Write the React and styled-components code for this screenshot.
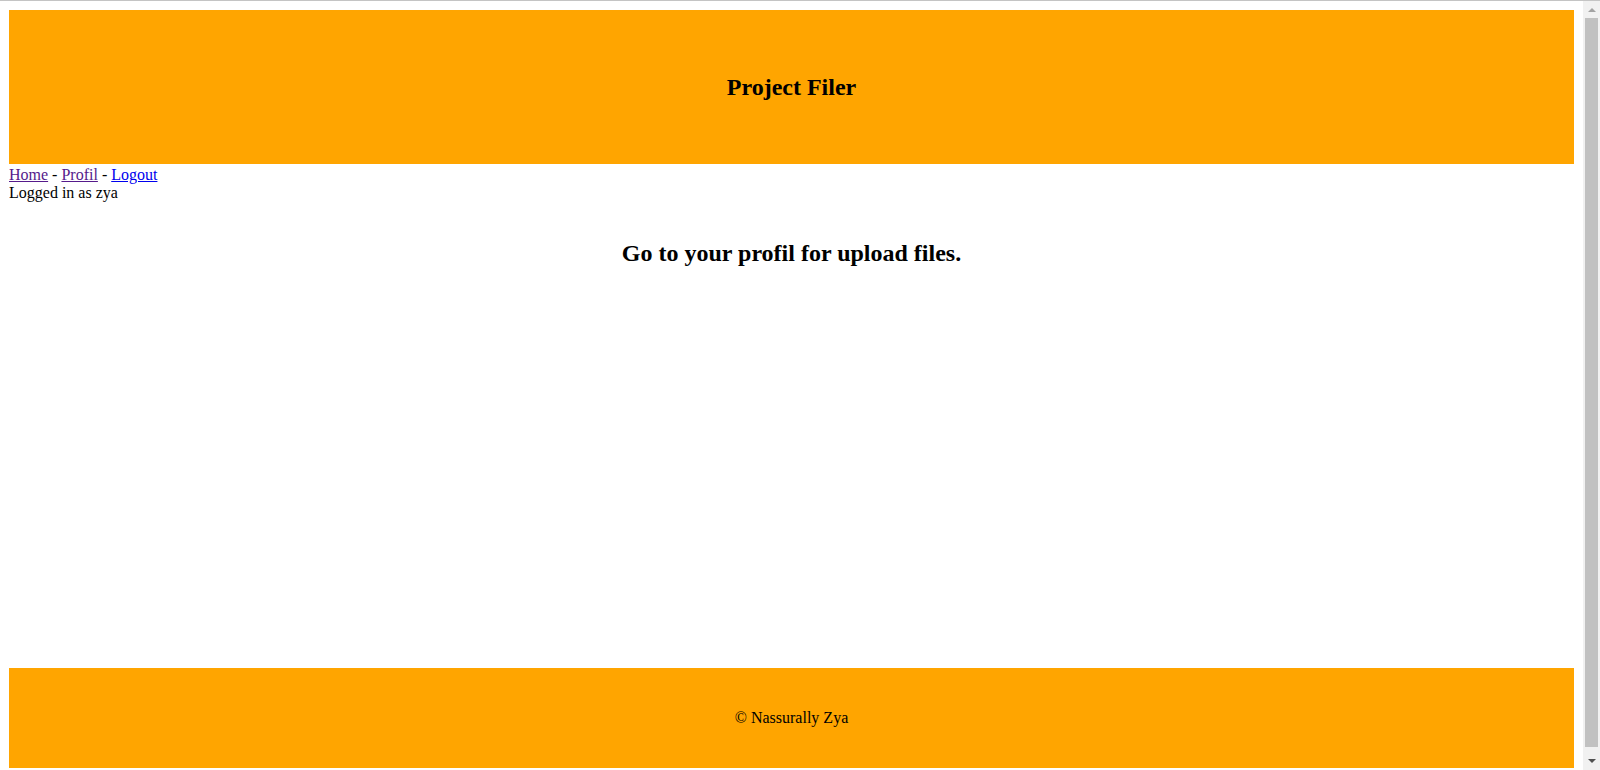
import React from "react";
import styled, { createGlobalStyle } from "styled-components";

const GlobalStyle = createGlobalStyle`
  html {
    border-top: 1px solid #c4c4c4;
  }
  body {
    margin: 9px 26px 9px 9px;
    font-family: "Liberation Serif", "Times New Roman", serif;
    font-size: 16px;
    color: #000;
    background: #fff;
  }
`;

const Page = styled.div`
  display: flex;
  flex-direction: column;
`;

const Banner = styled.header`
  height: 154px;
  background: #ffa500;
  display: flex;
  align-items: center;
  justify-content: center;
`;

const Title = styled.h2`
  margin: 0;
  font-size: 24px;
  font-weight: bold;
  line-height: 28px;
`;

const Nav = styled.nav`
  padding-top: 2px;
  line-height: 18px;
  height: 34px;
`;

const NavLink = styled.a`
  color: ${(p) => (p.$visited ? "#551a8b" : "#0000ee")};
  text-decoration: underline;
`;

const Main = styled.main`
  height: 468px;
  padding-top: 20px;
  box-sizing: border-box;
`;

const Heading = styled.h2`
  margin: 19px 0;
  font-size: 24px;
  font-weight: bold;
  line-height: 28px;
  text-align: center;
`;

const Footer = styled.footer`
  height: 100px;
  background: #ffa500;
  display: flex;
  align-items: center;
  justify-content: center;
`;

const FooterText = styled.p`
  margin: 0;
  line-height: 18px;
`;

const ScrollBar = styled.div`
  position: fixed;
  top: 1px;
  right: 0;
  bottom: 0;
  width: 17px;
  background: #f1f1f1;
  display: flex;
  flex-direction: column;
  align-items: center;
`;

const ArrowBox = styled.div`
  height: 17px;
  width: 17px;
  display: flex;
  align-items: center;
  justify-content: center;
  flex: none;
`;

const Thumb = styled.div`
  flex: 1;
  width: 13px;
  background: #c1c1c1;
  margin: 0 0 6px;
`;

export default function App() {
  return (
    <>
      <GlobalStyle />
      <Page>
        <Banner>
          <Title>Project Filer</Title>
        </Banner>
        <Nav>
          <div>
            <NavLink href="#" $visited>Home</NavLink> -{" "}
            <NavLink href="#" $visited>Profil</NavLink> -{" "}
            <NavLink href="#">Logout</NavLink>
          </div>
          <div>Logged in as zya</div>
        </Nav>
        <Main>
          <Heading>Go to your profil for upload files.</Heading>
        </Main>
        <Footer>
          <FooterText>© Nassurally Zya</FooterText>
        </Footer>
      </Page>
      <ScrollBar aria-hidden="true">
        <ArrowBox>
          <svg width="8" height="5" viewBox="0 0 8 5">
            <path d="M0 5 L4 1 L8 5 Z" fill="#a3a3a3" />
          </svg>
        </ArrowBox>
        <Thumb />
        <ArrowBox>
          <svg width="8" height="5" viewBox="0 0 8 5">
            <path d="M0 0 L8 0 L4 4 Z" fill="#505050" />
          </svg>
        </ArrowBox>
      </ScrollBar>
    </>
  );
}
